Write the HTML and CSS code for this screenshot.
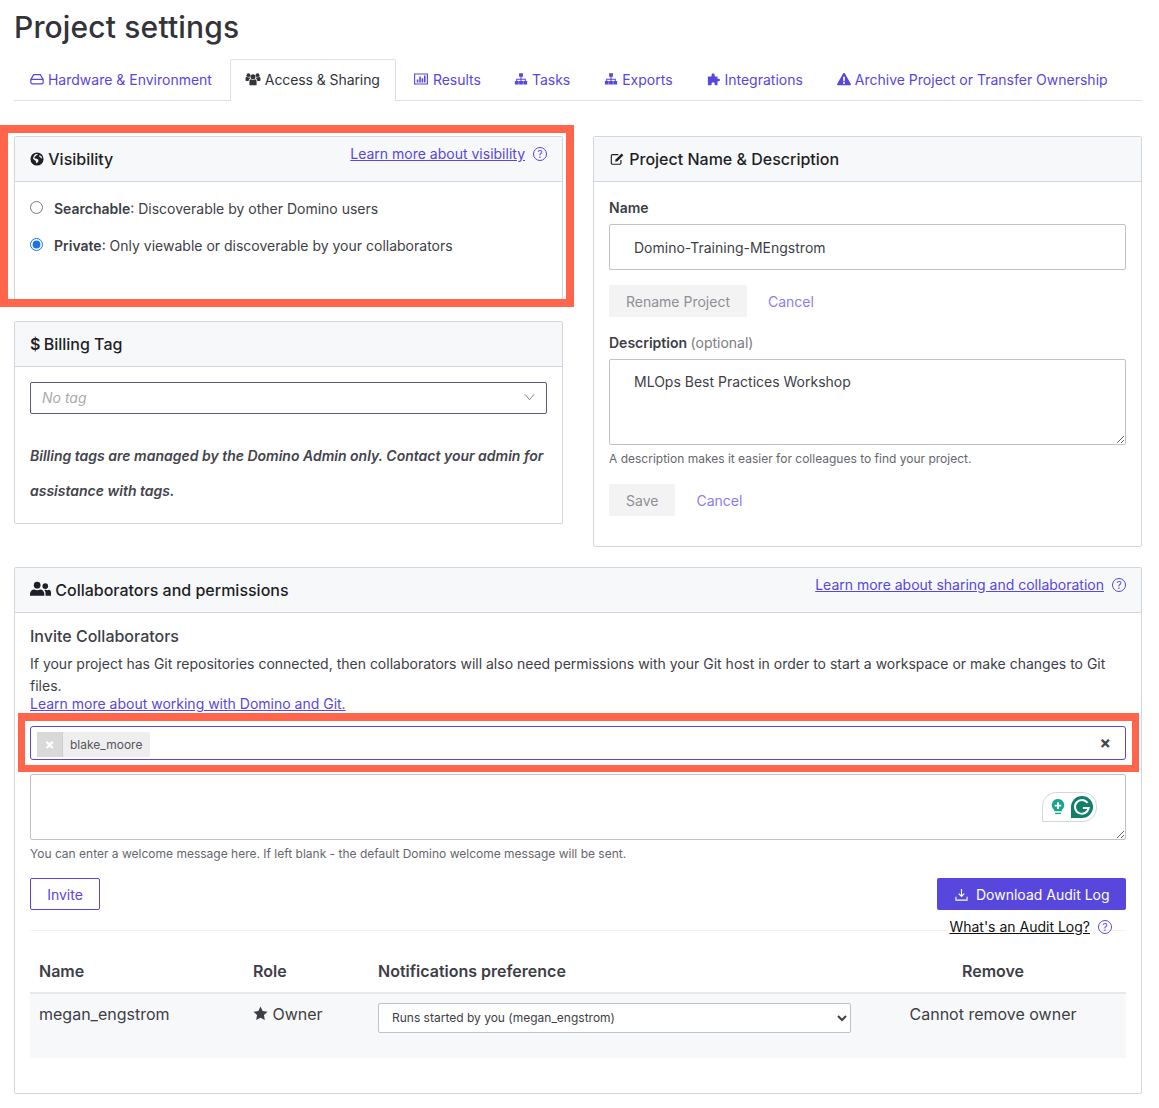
FILE: index.html
```html
<!DOCTYPE html>
<html lang="en">
<head>
  <meta charset="UTF-8" />
  <title>Project settings</title>
  <link rel="stylesheet" href="styles.css">
</head>
<body>
  <div class="page">
    <h1>Project settings</h1>

    <ul class="tabs">
      <li class="tab"><a href="#">
        <svg class="icon" viewBox="0 0 16 16"><path d="M4.200 3h7.600L15 8.600V12a1.500 1.500 0 0 1-1.500 1.500h-11A1.500 1.500 0 0 1 1 12V8.600z M1.400 8.400h13.200" fill="none" stroke="currentColor" stroke-width="1.400"/></svg>
        Hardware &amp; Environment</a></li>
      <li class="tab active"><a href="#">
        <svg class="icon icon-16" viewBox="0 0 17 16"><circle cx="8.500" cy="5.500" r="2.900"/><circle cx="3.300" cy="3.600" r="2.200"/><circle cx="13.700" cy="3.600" r="2.200"/><path d="M4.400 15v-4.200C4.400 9 5.400 8.200 6.300 8.200c.6.600 1.400.9 2.200.9s1.600-.3 2.200-.9c.9 0 1.900.8 1.900 2.600V15z"/><path d="M0 9.800V7.200C0 6.100.7 5.500 1.500 5.500c.5.500 1.100.7 1.800.7.400 0 .8-.1 1.100-.2.100.6.400 1.200.800 1.600-1 .3-1.500 1.200-1.700 2.600H.9C.4 10.200 0 10.100 0 9.800zM17 9.800V7.200C17 6.100 16.300 5.500 15.500 5.500c-.5.500-1.100.7-1.800.7-.4 0-.8-.1-1.100-.2-.1.600-.4 1.200-.8 1.600 1 .3 1.500 1.200 1.700 2.600h2.600c.5 0 .9-.1.900-.4z"/></svg>
        Access &amp; Sharing</a></li>
      <li class="tab tab-after-active"><a href="#">
        <svg class="icon icon-16" viewBox="0 0 16 16"><path d="M.700 2.300h14.600v11.400H.700z" fill="none" stroke="currentColor" stroke-width="1.300"/><path d="M3.200 8.500h1.800v3.500H3.200zM6 5h1.800v7H6zM8.700 7h1.800v5H8.700zM11.400 4h1.800v8h-1.800z"/></svg>
        Results</a></li>
      <li class="tab"><a href="#">
        <svg class="icon" viewBox="0 0 16 16"><path d="M5.800 1.500h4.400v4H8.600v2.200h4.900v2.500H15v4h-4.400v-4h1.700V8.900H8.600v1.300h1.600v4H5.800v-4h1.600V8.900H3.700v1.300h1.700v4H1v-4h1.500V7.700h4.900V5.500H5.800z"/></svg>
        Tasks</a></li>
      <li class="tab"><a href="#">
        <svg class="icon" viewBox="0 0 16 16"><path d="M5.800 1.500h4.400v4H8.600v2.200h4.900v2.500H15v4h-4.400v-4h1.700V8.900H8.600v1.300h1.600v4H5.800v-4h1.600V8.900H3.700v1.300h1.700v4H1v-4h1.500V7.700h4.900V5.500H5.800z"/></svg>
        Exports</a></li>
      <li class="tab"><a href="#">
        <svg class="icon" viewBox="0 0 16 16"><path d="M1 5h4.200V3.300a1.800 1.800 0 1 1 3.600 0V5h3.200v2.700h1.400a1.400 1.400 0 0 1 0 2.800H12V15H8.800v-1.500a1.800 1.800 0 1 0-3.600 0V15H1z"/></svg>
        Integrations</a></li>
      <li class="tab"><a href="#">
        <svg class="icon" viewBox="0 0 16 16"><path fill-rule="evenodd" d="M8 1c.4 0 .7.200.9.500l6.900 12.300c.4.700-.1 1.400-.9 1.400H1.100c-.8 0-1.300-.7-.9-1.400L7.100 1.500c.2-.3.500-.5.900-.5zM6.900 5.500l.3 5h1.600l.3-5zM8 11.300a1.200 1.200 0 1 0 0 2.400 1.200 1.200 0 0 0 0-2.400z"/></svg>
        Archive Project or Transfer Ownership</a></li>
    </ul>

    <div class="columns">
      <div class="col">
        <section class="panel panel-visibility">
          <header class="panel-head">
            <h2>
              <svg class="icon" viewBox="0 0 16 16"><path fill-rule="evenodd" d="M8 .5a7.500 7.500 0 1 0 0 15 7.500 7.500 0 0 0 0-15zM5.500 2.800c1-.6 2.400-.8 3.300-.4l-.3 1-1.300.3-.4 1-1.200.4-.6 1.300.7 1.200 1.500-.2 1.300.8 1.200.6-.3 2-1.600 2.100-.8-.6-.5-2.300-1.500-1L3.500 7.600l.3-1.700zM11 3.400l2.200 1.700.9 2.400-1.400-.3-1-1.300-1.300-.8z"/></svg>
              Visibility
            </h2>
            <div class="help"><a href="#">Learn more about visibility</a><span class="q">?</span></div>
          </header>
          <div class="panel-body">
            <label class="radio"><input type="radio" name="vis"><span><b>Searchable</b>: Discoverable by other Domino users</span></label>
            <label class="radio"><input type="radio" name="vis" checked><span><b>Private</b>: Only viewable or discoverable by your collaborators</span></label>
          </div>
        </section>

        <section class="panel panel-billing">
          <header class="panel-head"><h2><span class="dollar">$</span> Billing Tag</h2></header>
          <div class="panel-body">
            <div class="tag-select">
              <span>No tag</span>
              <svg viewBox="0 0 12 8" width="11" height="8"><path d="M1 1l5 6 5-6" fill="none" stroke="#777" stroke-width="1"/></svg>
            </div>
            <p class="billing-note">Billing tags are managed by the Domino Admin only. Contact your admin for assistance with tags.</p>
          </div>
        </section>
      </div>

      <section class="panel panel-project">
        <header class="panel-head">
          <h2>
            <svg class="icon icon-16" viewBox="0 0 16 16"><path d="M12.500 9v3.500a1.500 1.500 0 0 1-1.500 1.500H3a1.500 1.500 0 0 1-1.500-1.500v-8A1.500 1.500 0 0 1 3 3h6.500" fill="none" stroke="currentColor" stroke-width="1.300"/><path d="M13.300 1.600l2 2-6.800 6.900-2.600.6.500-2.600z"/></svg>
            Project Name &amp; Description
          </h2>
        </header>
        <div class="panel-body">
          <label class="field-label">Name</label>
          <input class="text-input" type="text" value="Domino-Training-MEngstrom">
          <div class="actions actions-name">
            <button class="btn-muted">Rename Project</button>
            <a class="cancel" href="#">Cancel</a>
          </div>
          <label class="field-label">Description <span class="optional">(optional)</span></label>
          <textarea class="text-area">MLOps Best Practices Workshop</textarea>
          <p class="hint">A description makes it easier for colleagues to find your project.</p>
          <div class="actions">
            <button class="btn-muted">Save</button>
            <a class="cancel" href="#">Cancel</a>
          </div>
        </div>
      </section>
    </div>

    <section class="panel panel-collab">
      <header class="panel-head">
        <h2>
          <svg class="icon icon-friends" viewBox="0 0 22 16"><circle cx="7.500" cy="4" r="3.500"/><circle cx="16" cy="5" r="2.900"/><path d="M0 15v-1.800C0 10.500 2 8.500 4.500 8.500c.9.500 1.900.8 3 .8s2.100-.3 3-.8c2.500 0 4.500 2 4.500 4.700V15z"/><path d="M16.300 15v-2.300c0-1.400-.5-2.600-1.300-3.600.6-.3 1.100-.3 1.300-.3.600.3 1.200.4 1.800.4s1.100-.1 1.700-.4c1.400.2 2.200 1.400 2.200 3V15z"/></svg>
          Collaborators and permissions
        </h2>
        <div class="help"><a href="#">Learn more about sharing and collaboration</a><span class="q">?</span></div>
      </header>
      <div class="panel-body collab-body">
        <h3>Invite Collaborators</h3>
        <p class="git-note">If your project has Git repositories connected, then collaborators will also need permissions with your Git host in order to start a workspace or make changes to Git files.</p>
        <a class="git-link" href="#">Learn more about working with Domino and Git.</a>

        <div class="invite-box">
          <span class="chip"><span class="chip-x">×</span><span class="chip-name">blake_moore</span></span>
          <span class="invite-clear">×</span>
        </div>

        <div class="message-wrap">
          <textarea class="message"></textarea>
          <div class="grammarly">
            <svg viewBox="0 0 16 20" width="16" height="19"><path d="M8 1a6.500 6.500 0 0 1 4 11.600V14H4v-1.400A6.500 6.500 0 0 1 8 1z" fill="#15a58c"/><path d="M7 4.500h2V7h2.500v2H9v2.500H7V9H4.500V7H7z" fill="#fff"/><path d="M5 15.500h6V17H5z" fill="#15a58c"/></svg>
            <svg viewBox="0 0 24 24" width="22" height="22"><path d="M12 0a12 12 0 0 1 0 24H0V12A12 12 0 0 1 12 0z" fill="#11806a"/><path d="M18 7.500A7.500 7.500 0 1 0 19.300 13H13" fill="none" stroke="#fff" stroke-width="2.200"/></svg>
          </div>
        </div>
        <p class="hint">You can enter a welcome message here. If left blank - the default Domino welcome message will be sent.</p>

        <div class="invite-row">
          <button class="btn-outline">Invite</button>
          <button class="btn-primary">
            <svg viewBox="0 0 14 14" width="13" height="13"><path d="M7 1v7.500M4 6l3 3 3-3M1 9.500V13h12V9.500" fill="none" stroke="#fff" stroke-width="1.200"/></svg>
            Download Audit Log
          </button>
        </div>
        <div class="audit-help"><a href="#">What's an Audit Log?</a><span class="q">?</span></div>

        <table class="people">
          <thead>
            <tr><th class="c-name">Name</th><th class="c-role">Role</th><th class="c-notif">Notifications preference</th><th class="c-remove">Remove</th></tr>
          </thead>
          <tbody>
            <tr>
              <td>megan_engstrom</td>
              <td>
                <svg class="icon icon-star" viewBox="0 0 16 16"><path d="M8 .6l2.300 4.800 5.200.7-3.800 3.600.9 5.200L8 12.400l-4.600 2.500.9-5.200L.5 6.100l5.200-.7z"/></svg>
                Owner
              </td>
              <td>
                <select class="notif-select"><option>Runs started by you (megan_engstrom)</option></select>
              </td>
              <td class="c-remove">Cannot remove owner</td>
            </tr>
          </tbody>
        </table>
      </div>
    </section>

    <div class="callout callout-visibility"></div>
    <div class="callout callout-invite"></div>
  </div>
</body>
</html>
```

FILE: styles.css
```css
* { box-sizing: border-box; }
body { margin: 0; font-family: Inter, "Liberation Sans", sans-serif; font-size: 14px; color: #3e3e46; background: white; }
a { color: #5847dc; }
.page { position: relative; height: 1108px; padding: 0 17px 0 14px; overflow: hidden; }
h1 { margin: 0; padding-top: 9px; height: 59px; font-size: 30px; line-height: 36px; font-weight: 500; letter-spacing: .15px; color: #33333a; }

.icon { width: 14px; height: 14px; fill: currentColor; vertical-align: -1px; }
.icon-16 { width: 16px; height: 14px; }
.icon-friends { width: 21px; height: 16px; vertical-align: -1px; }

.tabs { display: flex; margin: 0 0 35px; padding: 0; list-style: none; height: 42px; border-bottom: 1px solid #dcdfe4; }
.tab { padding: 0 17px 0 16px; line-height: 41px; }
.tab:first-child { padding-right: 18px; }
.tab:nth-child(n+4) { padding-right: 18px; }
.tab a { color: #5847dc; text-decoration: none; white-space: nowrap; }
.tab.active { flex: 0 0 166px; margin-bottom: -1px; height: 42px; line-height: 39px; background: white; border: 1px solid #dcdfe4; border-bottom: none; border-radius: 2px 2px 0 0; padding: 0 0 0 14px; }
.tab.active a { color: #33333a; letter-spacing: -.08px; }
.tab-after-active { padding-left: 17px; }

.columns { display: grid; grid-template-columns: 549px 549px; column-gap: 30px; margin-bottom: 20px; }
.col { display: flex; flex-direction: column; gap: 21px; }

.panel { background: white; border: 1px solid #d3d7dd; border-radius: 2px; }
.panel-visibility { height: 164px; }
.panel-billing { height: 203px; }
.panel-project { height: 411px; }
.panel-collab { height: 527px; }
.panel-head { display: flex; justify-content: space-between; height: 45px; padding: 0 15px; background: #f7f8fa; border-bottom: 1px solid #d3d7dd; }
h2 { margin: 0; font-size: 16px; font-weight: 500; line-height: 45px; color: #1f1f26; }
.panel-body { padding: 15px; }
.dollar { font-weight: 600; margin-right: -1px; }

.help { font-size: 14px; line-height: 33px; white-space: nowrap; }
.q { display: inline-block; width: 14px; height: 14px; margin-left: 8px; border: 1.300px solid #5847dc; border-radius: 50%; color: #5847dc; font-size: 10px; line-height: 12px; text-align: center; vertical-align: 1px; }

.radio { display: flex; align-items: center; height: 37px; }
.radio input { margin: 0 11px 0 0; width: 13px; height: 13px; accent-color: #1a73e8; position: relative; top: -1px; }
.radio b { font-weight: 600; }
.panel-visibility .panel-body { padding-top: 8px; }

.tag-select { display: flex; justify-content: space-between; align-items: center; height: 32px; padding: 0 11px 2px 11px; border: 1px solid #5d5a7c; border-radius: 2px; font-style: italic; color: #aaa; }
.billing-note { margin: 24px 0 0; font-size: 14px; line-height: 35px; font-weight: 600; font-style: italic; color: #44444c; }

.field-label { display: block; font-weight: 600; line-height: 20px; margin-bottom: 6px; }
.panel-project .panel-body { padding-top: 16px; }
.optional { font-weight: 400; color: #7b7b83; }
.text-input { display: block; width: 100%; height: 46px; padding: 0 24px; border: 1px solid #bfc2c8; border-radius: 2px; font: inherit; color: #3e3e46; }
.text-area { display: block; width: 100%; height: 86px; padding: 13px 24px; border: 1px solid #bfc2c8; border-radius: 2px; font: inherit; color: #3e3e46; }
.field-label + .text-area { margin-top: 4px; }
.hint { margin: 6px 0 0; font-size: 12px; line-height: 16px; color: #66666e; }

.actions { display: flex; align-items: center; gap: 21px; margin-top: 15px; height: 32px; }
.actions-name { margin-bottom: 16px; }
.hint + .actions { margin-top: 17px; }
.btn-muted { height: 32px; padding: 0 17px; background: #f3f3f4; border: none; border-radius: 2px; font: inherit; color: #8f8f96; }
.cancel { color: #8a7df0; text-decoration: none; }

h3 { margin: 0; font-size: 16px; font-weight: 500; line-height: 22px; color: #3e3e46; }
.collab-body { padding-top: 12px; }
.git-note { margin: 6px 0 0; line-height: 22px; }
.git-link { display: block; line-height: 14px; }
.invite-box { display: flex; justify-content: space-between; align-items: center; height: 34px; margin-top: 15px; padding: 0 14px 0 6px; border: 1px solid #5847dc; border-radius: 3px; }
.chip { display: flex; height: 25px; margin-top: 2px; border-radius: 2px; background: #eeeeef; font-size: 12px; line-height: 25px; }
.chip-x { width: 26px; background: #d9d9da; color: white; text-align: center; font-weight: 700; font-size: 15px; border-right: 1px solid #cfcfd0; }
.chip-name { padding: 0 8px 0 7px; color: #55555c; }
.invite-clear { font-size: 17px; font-weight: 700; color: #444; }

.message-wrap { position: relative; margin-top: 14px; height: 66px; }
.message { display: block; width: 100%; height: 66px; border: 1px solid #bfc2c8; border-radius: 2px; }
.grammarly { position: absolute; top: 18px; right: 29px; display: flex; align-items: center; gap: 5px; width: 55px; height: 30px; padding-left: 7px; background: white; border: 1px solid #d4d8de; border-radius: 14px 14px 14px 0; }
.collab-body .hint { margin-top: 6px; }

.invite-row { display: flex; justify-content: space-between; margin-top: 16px; }
.btn-outline { width: 70px; height: 32px; background: white; border: 1px solid #5847dc; border-radius: 2px; font: inherit; color: #5847dc; }
.btn-primary { display: flex; align-items: center; gap: 8px; width: 189px; height: 32px; padding: 0 0 0 18px; background: #5847dc; border: none; border-radius: 2px; font: inherit; color: white; }
.audit-help { position: relative; z-index: 1; display: flex; justify-content: flex-end; align-items: center; padding-right: 14px; height: 21px; margin-top: 6px; }
.audit-help a { color: #111; }
.audit-help .q { vertical-align: 0; }

.people { width: 100%; margin-top: -7px; border-collapse: collapse; border-top: 1px solid #f0f1f3; table-layout: fixed; }
.people th { height: 62px; padding: 19px 9px 0; text-align: left; font-size: 16px; font-weight: 600; border-bottom: 2px solid #e6e8ec; }
.people td { height: 65px; padding: 9px 9px 0; vertical-align: top; font-size: 16px; line-height: 22px; background: #f7f8fa; }
.c-name { width: 214px; }
.c-role { width: 134px; }
.c-notif { width: 482px; }
.people th.c-notif { padding-left: 0; }
.people td:nth-child(3) { padding: 9px 0 0; }
.people .c-remove { text-align: center; }
.icon-star { width: 15px; height: 15px; vertical-align: -1px; }
.notif-select { width: 473px; height: 30px; padding-left: 9px; font-family: Inter, sans-serif; font-size: 12px; color: #3e3e46; background: white; border: 1px solid #bfc2c8; border-radius: 2px; }

/* annotation frames drawn over the screenshot */
.callout { position: absolute; border: 8px solid #ff654a; }
.callout-visibility { left: 0; top: 125px; width: 574px; height: 182px; }
.callout-invite { left: 18px; top: 713px; width: 1121px; height: 59px; border-width: 8px 7px 7px 7px; }
```
